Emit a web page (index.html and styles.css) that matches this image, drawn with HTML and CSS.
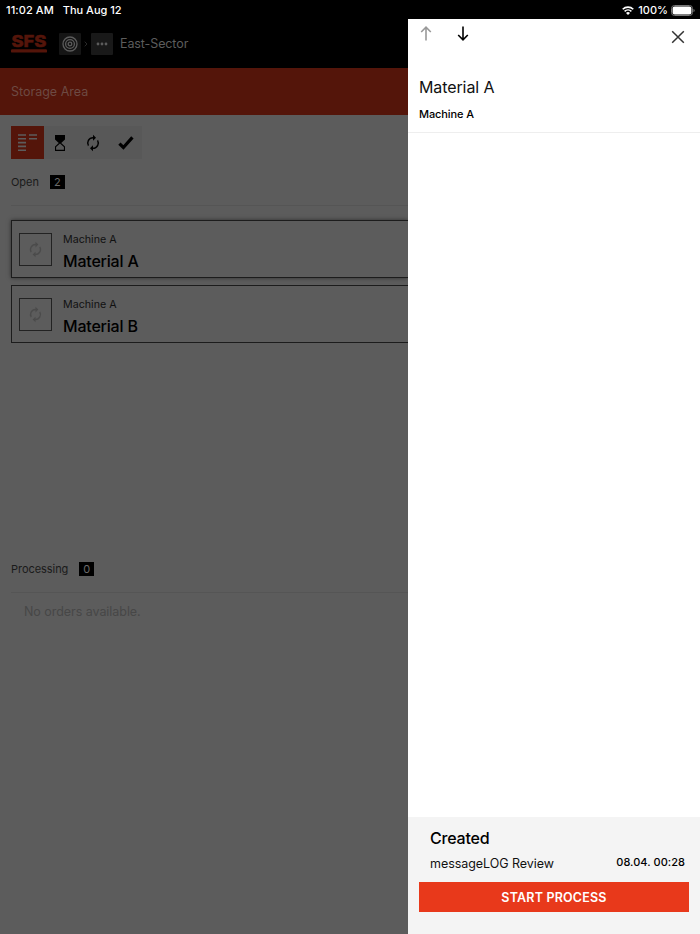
FILE: index.html
```html
<!DOCTYPE html>
<html lang="en">
<head>
<title>Storage Area</title>
<meta charset="utf-8">
<link rel="stylesheet" href="styles.css">
</head>
<body>
<svg class="defs">
	<symbol id="refresh" viewBox="0 0 24 24">
		<path d="M12 6v3l4-4-4-4v3a8 8 0 0 0-6.76 12.26l1.46-1.46A6 6 0 0 1 12 6zm6.76 1.74L17.3 9.2A6 6 0 0 1 12 18v-3l-4 4 4 4v-3a8 8 0 0 0 6.76-12.26z"/>
	</symbol>
</svg>
<div class="statusbar">
	<span class="time">11:02 AM</span>
	<span class="date">Thu Aug 12</span>
	<svg class="wifi" viewBox="0 0 12 9"><path d="M.7 3.3a7.6 7.6 0 0 1 10.6 0M2.6 5.3a4.9 4.9 0 0 1 6.8 0" fill="none" stroke="#fff" stroke-width="1.6"/><path d="M6 8.9L4 6.9a2.9 2.9 0 0 1 4 0z" fill="#fff"/></svg>
	<span class="percent">100%</span>
	<svg class="battery" viewBox="0 0 24 11"><rect x=".5" y=".5" width="21" height="10" rx="3" fill="none" stroke="#777"/><rect x="1.6" y="1.6" width="18.8" height="7.8" rx="2" fill="#fff"/><path d="M22.5 3.7a2 2 0 0 1 0 3.6z" fill="#777"/></svg>
</div>
<div class="app">
	<main class="page">
		<header class="topbar">
			<svg class="logo" viewBox="0 0 36 18"><text class="logotext" x="0.5" y="12.4" textLength="35" lengthAdjust="spacingAndGlyphs">SFS</text><rect x="0" y="14.2" width="36" height="3.4" rx="1.2"/></svg>
			<span class="crumb"><svg viewBox="0 0 16 16"><circle cx="8" cy="8" r="7"/><circle cx="8" cy="8" r="4.4"/><circle cx="8" cy="8" r="1.8"/></svg></span>
			<svg class="chevron" viewBox="0 0 4 6"><path d="M.7.7L3 3 .7 5.3"/></svg>
			<span class="crumb dots"><svg viewBox="0 0 12 4"><circle cx="2" cy="2" r="1.4"/><circle cx="6" cy="2" r="1.4"/><circle cx="10" cy="2" r="1.4"/></svg></span>
			<span class="sector">East-Sector</span>
		</header>
		<div class="titlebar"><span>Storage Area</span></div>
		<nav class="tabs">
			<a class="tab active"><svg viewBox="0 0 20 18"><path d="M1 1h8M1 4.8h8M1 8.6h8M1 12.4h8M1 16.2h8M12 1h8M12 4.8h8"/></svg></a>
			<a class="tab"><svg class="hourglass" viewBox="0 0 10 16"><path d="M0 0h10v4.4L6.2 8 10 11.6V16H0v-4.4L3.8 8 0 4.4zM5 8.6l-3.9 3.5v2.7h7.8v-2.7z" fill-rule="evenodd"/></svg></a>
			<a class="tab"><svg class="refresh"><use href="#refresh"/></svg></a>
			<a class="tab"><svg class="check" viewBox="0 0 16 14"><path d="M1.4 7.6l4 3.9L14.4 1.4"/></svg></a>
		</nav>
		<section class="open">
			<h3><span>Open</span><b class="count">2</b></h3>
			<div class="order selected">
				<span class="state"><svg><use href="#refresh"/></svg></span>
				<div><p>Machine A</p><h2>Material A</h2></div>
			</div>
			<div class="order">
				<span class="state"><svg><use href="#refresh"/></svg></span>
				<div><p>Machine A</p><h2>Material B</h2></div>
			</div>
		</section>
		<section class="processing">
			<h3><span>Processing</span><b class="count">0</b></h3>
			<p class="empty">No orders available.</p>
		</section>
	</main>
	<aside class="drawer">
		<div class="drawerhead">
			<svg class="arrow off" viewBox="0 0 12 15"><path d="M6 14.5V1.4M1.2 6L6 1.2 10.8 6"/></svg>
			<svg class="arrow" viewBox="0 0 12 15"><path d="M6 .5v13.1M1.2 9L6 13.8 10.8 9"/></svg>
			<svg class="close" viewBox="0 0 14 14"><path d="M1.2 1.2l11.6 11.6M12.8 1.2L1.2 12.8"/></svg>
		</div>
		<div class="detail">
			<h1>Material A</h1>
			<p>Machine A</p>
		</div>
		<footer class="drawerfoot">
			<h2>Created</h2>
			<div class="info"><span class="user">messageLOG Review</span><span class="stamp">08.04. 00:28</span></div>
			<button>START PROCESS</button>
		</footer>
	</aside>
</div>
</body>
</html>
```
FILE: styles.css
```css
* {
	box-sizing: border-box;
}
body {
	margin: 0;
	height: 934px;
	display: flex;
	flex-direction: column;
	overflow: hidden;
	background: #000;
	color: #000;
	font-family: Inter, "Liberation Sans", sans-serif;
}
h1, h2, h3, p {
	margin: 0;
	font-weight: 400;
}
svg {
	display: block;
	flex: none;
}
span, h1, h2, p {
	white-space: nowrap;
}
.defs {
	display: none;
}
.statusbar {
	height: 19px;
	flex: none;
	display: flex;
	align-items: center;
	padding: 1px 5px 0 6px;
	color: #fff;
	font-size: 11px;
	font-weight: 500;
}
.time {
	letter-spacing: .08px;
}
.date {
	margin-left: 9px;
}
.wifi {
	width: 12px;
	height: 9px;
	margin-left: auto;
}
.percent {
	margin: 0 3px 0 4px;
}
.battery {
	width: 24px;
	height: 11px;
}
.app {
	flex: 1;
	display: flex;
}
.page {
	width: 408px;
	background: #5c5c5c;
}
.topbar {
	height: 49px;
	display: flex;
	align-items: center;
	padding: 0 11px;
	background: #000;
}
.logo {
	width: 36px;
	height: 18px;
	margin-right: 12px;
	overflow: visible;
	fill: #54150a;
}
.logotext {
	font-size: 16px;
	font-weight: 800;
	stroke: #54150a;
	stroke-width: .5;
}
.crumb {
	width: 22px;
	height: 22px;
	display: flex;
	align-items: center;
	justify-content: center;
	border-radius: 1px;
	background: #151515;
}
.crumb svg {
	width: 16px;
	height: 16px;
	fill: none;
	stroke: #5c5c5c;
	stroke-width: 1.3;
}
.dots {
	background: #191919;
}
.dots svg {
	width: 12px;
	height: 4px;
	fill: #5c5c5c;
	stroke: none;
}
.chevron {
	width: 4px;
	height: 6px;
	margin: 0 3px;
	fill: none;
	stroke: #292929;
}
.sector {
	margin-left: 7px;
	color: #5c5c5c;
	font-size: 12.5px;
	letter-spacing: -.1px;
}
.titlebar {
	height: 47px;
	display: flex;
	align-items: center;
	padding: 0 11px;
	background: #54150a;
	color: #6d4a43;
	font-size: 12.5px;
}
.tabs {
	width: 131px;
	height: 33px;
	margin: 11px 0 0 11px;
	display: flex;
	background: #585858;
}
.tab {
	width: 33px;
	display: flex;
	align-items: center;
	justify-content: center;
}
.active {
	background: #54150a;
}
.active svg {
	width: 20px;
	height: 18px;
	fill: none;
	stroke: #5c5c5c;
	stroke-width: 1.6;
}
.hourglass {
	width: 10px;
	height: 16px;
}
.refresh {
	width: 18px;
	height: 18px;
}
.check {
	width: 16px;
	height: 14px;
	fill: none;
	stroke: #000;
	stroke-width: 3.2;
}
.open {
	height: 387px;
	padding: 16px 0 0 11px;
}
.processing {
	padding: 16px 0 0 11px;
}
h3 {
	height: 31px;
	margin-bottom: 14px;
	display: flex;
	align-items: flex-start;
	border-bottom: 1px solid #555;
	color: #1a1a1a;
	font-size: 11px;
	line-height: 14px;
	letter-spacing: -.05px;
}
.count {
	width: 15px;
	height: 14px;
	margin-left: 11px;
	background: #000;
	color: #6a6a6a;
	font-weight: 400;
	text-align: center;
}
.order {
	height: 58px;
	margin-bottom: 7px;
	display: flex;
	align-items: center;
	padding-left: 7px;
	border: 1px solid #1c1c1c;
	border-right: 0;
}
.selected {
	box-shadow: 0 0 4px rgba(0, 0, 0, .5);
}
.state {
	width: 33px;
	height: 33px;
	margin-right: 11px;
	display: flex;
	align-items: center;
	justify-content: center;
	border: 1px solid #222;
}
.state svg {
	width: 17px;
	height: 17px;
	fill: #4b4b4b;
}
.order p {
	color: #111;
	font-size: 10.7px;
	line-height: 15px;
	padding-top: 8px;
}
.order h2 {
	font-size: 16px;
	line-height: 28px;
	font-weight: 500;
	letter-spacing: -.2px;
}
.empty {
	padding-left: 13px;
	color: #474747;
	font-size: 12.5px;
	line-height: 16px;
	margin-top: -3px;
	letter-spacing: -.05px;
}
.drawer {
	width: 292px;
	display: flex;
	flex-direction: column;
	background: #fff;
}
.drawerhead {
	height: 54px;
	display: flex;
	padding: 7px 15px 0 12px;
}
.arrow {
	width: 12px;
	height: 15px;
	margin-right: 25px;
	fill: none;
	stroke: #000;
	stroke-width: 1.6;
}
.off {
	stroke: #999;
}
.close {
	width: 14px;
	height: 14px;
	margin: 4px 0 0 auto;
	fill: none;
	stroke: #333;
	stroke-width: 1.5;
}
.detail {
	height: 60px;
	padding: 2px 11px 0;
	border-bottom: 1px solid #eee;
}
.detail h1 {
	color: #111;
	font-size: 16px;
	line-height: 24px;
	letter-spacing: -.1px;
}
.detail p {
	padding-top: 7px;
	font-size: 11px;
	line-height: 16px;
	font-weight: 500;
	letter-spacing: -.1px;
}
.drawerfoot {
	height: 117px;
	margin-top: auto;
	padding: 10px 11px 0;
	background: #f4f4f4;
}
.drawerfoot h2 {
	padding-left: 11px;
	font-size: 16px;
	line-height: 22px;
	font-weight: 500;
	letter-spacing: -.2px;
}
.info {
	height: 33px;
	display: flex;
	justify-content: space-between;
	padding: 6px 4px 0 11px;
	line-height: 18px;
}
.user {
	color: #111;
	font-size: 12.5px;
	letter-spacing: -.05px;
}
.stamp {
	margin-top: -2px;
	font-size: 11px;
	font-weight: 500;
	letter-spacing: .05px;
}
.drawerfoot button {
	display: block;
	width: 270px;
	height: 30px;
	padding: 0;
	border: 0;
	background: #e8391b;
	color: #fff;
	font: 600 12.5px Inter, sans-serif;
	letter-spacing: .2px;
}
```
